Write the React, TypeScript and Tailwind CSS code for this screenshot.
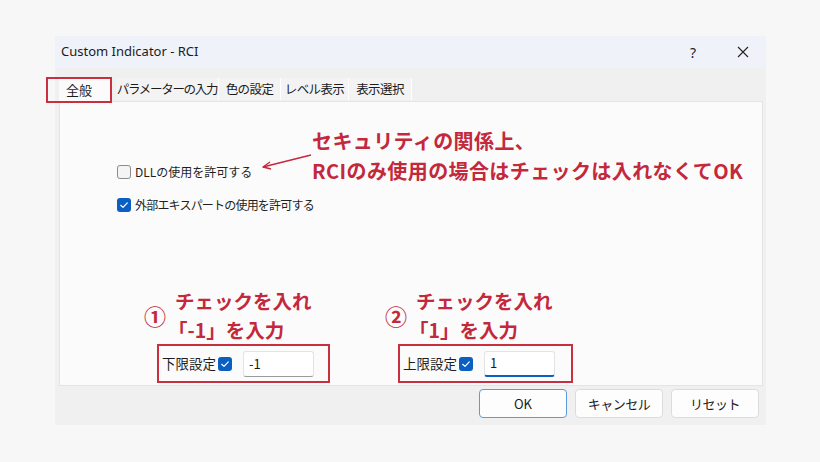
import React from 'react';

const RED = 'text-[#c4283b]';

function Checked() {
  return (
    <svg viewBox="0 0 14 14" className="w-[14px] h-[14px] shrink-0">
      <rect width="14" height="14" rx="3" fill="#0b5fc1" />
      <path d="M3.7 7.3 L6 9.4 L10.3 4.9" fill="none" stroke="#fff" strokeWidth="1.2" strokeLinecap="round" strokeLinejoin="round" />
    </svg>
  );
}

function Unchecked() {
  return <div className="w-[14px] h-[14px] shrink-0 rounded-[3px] border border-[#8c8c8c] bg-[#f4f4f4]" />;
}

function LimitField({ num, value, label, focused, width }: { num: string; value: string; label: string; focused?: boolean; width: string }) {
  return (
    <div className="flex flex-col">
      <div className={`flex items-center -ml-[13px] font-bold ${RED}`}>
        <span className="w-[22px] text-[22px] leading-none">{num}</span>
        <div className="ml-[9px] flex flex-col text-[19.5px] leading-[29px]">
          <span>チェックを入れ</span>
          <span className="-ml-[7px]">「{value}」を入力</span>
        </div>
      </div>
      <div className={`${width} h-[39px] border-2 border-[#c8303f] flex items-center pl-[3px]`}>
        <span className="text-[13.5px] text-[#1f1f1f] pb-[1px]">{label}</span>
        <span className="ml-[2px]"><Checked /></span>
        <div
          className={`ml-[11px] w-[71px] h-[26px] bg-white border border-[#e3e3e3] rounded-[3px] flex items-center pl-[5px] text-[13px] text-[#1a1a1a] ${
            focused ? 'border-b-2 border-b-[#0b5fc1]' : 'border-b-[#9a9a9a]'
          }`}
        >
          {value}
        </div>
      </div>
    </div>
  );
}

export default function App() {
  const tabs = ['パラメーターの入力', '色の設定', 'レベル表示', '表示選択'];
  const tabWidths = ['w-[103px]', 'w-[62px]', 'w-[68px]', 'w-[63px]'];

  return (
    <div className="relative w-[820px] h-[462px] overflow-hidden bg-[#f7f7f7] pt-[36px] pl-[55px] font-['Noto_Sans','Noto_Sans_CJK_JP',sans-serif]">
      <div className="relative w-[711px] h-[389px] bg-[#f0f0f0] flex flex-col">
        {/* title bar */}
        <div className="h-[32px] shrink-0 bg-[#eff2f9] flex items-center pl-[6px] pr-[17px] text-[13px] text-[#1b1b1b]">
          <span>Custom Indicator - RCI</span>
          <span className="ml-auto text-[14px]">?</span>
          <svg viewBox="0 0 12 12" className="ml-[41px] w-[12px] h-[12px]">
            <path d="M1 1 L11 11 M11 1 L1 11" stroke="#222" strokeWidth="1.1" />
          </svg>
        </div>

        {/* tabs */}
        <div className="h-[33px] shrink-0 flex items-end pl-[4px] font-['Noto_Sans_CJK_JP',sans-serif] text-[12.5px] text-[#1b1b1b]">
          <div className="relative w-[53px] h-[22px] bg-[#fbfbfb] flex items-center pl-[7px] text-[13px]">
            全般
            <div className="absolute -left-[13px] -top-[2px] w-[66px] h-[26px] border-2 border-[#c8303f]" />
          </div>
          <div className="flex ml-[4px] mb-[1px]">
            {tabs.map((t, i) => (
              <div key={t} className={`${tabWidths[i]} h-[22px] bg-[#f3f3f3] border-r border-white flex items-center justify-center whitespace-nowrap ${i === 0 ? 'tracking-[-1.3px]' : 'tracking-[-0.6px]'}`}>
                {t}
              </div>
            ))}
          </div>
        </div>

        {/* tab panel */}
        <div className="ml-[4px] w-[704px] h-[285px] shrink-0 bg-[#fbfbfb] border border-[#e4e4e4] font-['Noto_Sans_CJK_JP',sans-serif]">
          <div className="flex flex-col pl-[57px] pt-[60px] text-[12px] text-[#1f1f1f]">
            <div className="h-[20px] flex items-center gap-[4px]">
              <Unchecked />
              <span>DLLの使用を許可する</span>
            </div>
            <div className="h-[20px] mt-[13px] flex items-center gap-[4px]">
              <Checked />
              <span className="tracking-[-0.8px]">外部エキスパートの使用を許可する</span>
            </div>
          </div>
          <div className="flex ml-[97px] mt-[71px] gap-[68px]">
            <LimitField num="①" value="-1" label="下限設定" width="w-[173px]" />
            <LimitField num="②" value="1" label="上限設定" width="w-[175px]" focused />
          </div>
        </div>

        {/* buttons */}
        <div className="flex justify-end gap-[8px] pr-[7px] pt-[3px] font-['Noto_Sans_CJK_JP',sans-serif] text-[13px] text-[#1b1b1b]">
          <button className="w-[88px] h-[29px] rounded-[4px] border border-[#5b9bdc] bg-[#fdfdfd]">OK</button>
          <button className="w-[88px] h-[29px] rounded-[4px] border border-[#dcdcdc] bg-[#fdfdfd] tracking-[-0.5px]">キャンセル</button>
          <button className="w-[88px] h-[29px] rounded-[4px] border border-[#dcdcdc] bg-[#fdfdfd] tracking-[-0.5px]">リセット</button>
        </div>
      </div>

      {/* annotation */}
      <div className={`absolute left-[312px] top-[126px] flex flex-col font-['Noto_Sans_CJK_JP',sans-serif] font-bold text-[20px] tracking-[0.4px] leading-[30px] ${RED}`}>
        <span>セキュリティの関係上、</span>
        <span>RCIのみ使用の場合はチェックは入れなくてOK</span>
      </div>
      <svg className="absolute left-[258px] top-[150px] w-[56px] h-[22px]" viewBox="0 0 56 22">
        <path d="M53 5 L5 17" stroke="#c4283b" strokeWidth="1.3" fill="none" />
        <path d="M12 12 L5 17 L13 19" stroke="#c4283b" strokeWidth="1.3" fill="none" strokeLinejoin="round" />
      </svg>
    </div>
  );
}
